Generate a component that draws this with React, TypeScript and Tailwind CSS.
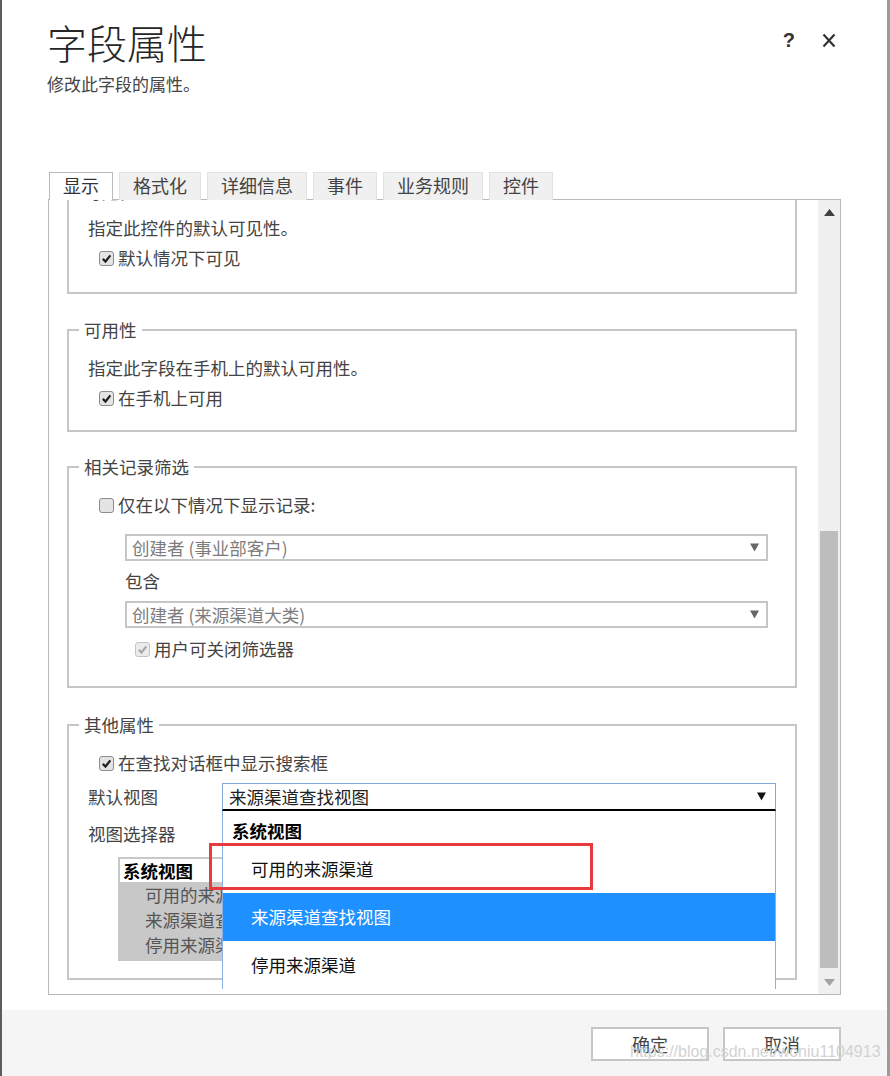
import React from "react";

function CheckBox({ checked = false, disabled = false }: { checked?: boolean; disabled?: boolean }) {
  return (
    <span
      className={
        "inline-flex h-[15px] w-[15px] shrink-0 items-center justify-center rounded-[3px] border " +
        (disabled ? "border-[#c4c4c4] bg-[#ececec]" : "border-[#8c8c8c] bg-[#e4e4e4]")
      }
    >
      {checked && (
        <svg viewBox="0 0 12 12" className="h-[11px] w-[11px]">
          <path
            d="M2 6.4 L4.9 9.3 L10.2 2.6"
            fill="none"
            stroke={disabled ? "#a8a8a8" : "#1e1e1e"}
            strokeWidth="2.4"
          />
        </svg>
      )}
    </span>
  );
}

function Arrow({ color }: { color: string }) {
  return (
    <svg width="9" height="9" viewBox="0 0 9 9">
      <path d="M0 0.5 H9 L4.5 8.5 Z" fill={color} />
    </svg>
  );
}

function GraySelect({ text }: { text: string }) {
  return (
    <div className="ml-[37px] flex h-[27px] w-[643px] items-center justify-between border-2 border-[#c6c6c6] bg-white pl-[5px] pr-[7px] text-[#7d7d7d]">
      <span className="leading-[23px]">{text}</span>
      <Arrow color="#666666" />
    </div>
  );
}

function Group({ title, className, children }: { title: string; className?: string; children: React.ReactNode }) {
  return (
    <fieldset className={"ml-[18px] w-[730px] border-2 border-[#c6c6c6] pl-[19px] pt-[10px] " + (className ?? "")}>
      <legend className="-ml-[9px] px-[5px] leading-[26px] text-[#444]">{title}</legend>
      {children}
    </fieldset>
  );
}

function CheckRow({ label, checked, disabled, indent = "ml-[11px]" }: { label: string; checked?: boolean; disabled?: boolean; indent?: string }) {
  return (
    <div className={"flex h-[30px] items-center gap-[4px] " + indent}>
      <CheckBox checked={checked} disabled={disabled} />
      <span className="text-[#444]">{label}</span>
    </div>
  );
}

const tabs = ["显示", "格式化", "详细信息", "事件", "业务规则", "控件"];

export default function App() {
  return (
    <div className="relative flex h-[1076px] w-[890px] flex-col overflow-hidden border-l-2 border-r-[3px] border-l-[#5c5c5c] border-r-[#9c9c9c] bg-white font-['Noto_Sans_CJK_SC',sans-serif] text-[17.5px]">
      {/* Header */}
      <div className="flex items-start justify-between pl-[45px] pr-[51px] pt-[18px]">
        <div>
          <h1 className="text-[40px] font-extralight leading-[48px] text-[#262626]">字段属性</h1>
          <p className="mt-[6px] text-[17px] leading-[24px] text-[#444]">修改此字段的属性。</p>
        </div>
        <div className="mt-[14px] flex items-center gap-[27px] text-[#333]">
          <span className="font-['Liberation_Sans',sans-serif] text-[20px] font-bold leading-[16px]">?</span>
          <svg width="14" height="15" viewBox="0 0 14 15">
            <path d="M1.5 1.5 L12.5 13.5 M12.5 1.5 L1.5 13.5" stroke="#333" strokeWidth="2.2" />
          </svg>
        </div>
      </div>

      {/* Tabs */}
      <div className="relative z-10 ml-[47px] mt-[76px] flex gap-[6px]">
        {tabs.map((t, i) => (
          <div
            key={t}
            className={
              "-mb-px flex h-[28px] items-center px-[13px] pb-[4px] text-[18px] leading-[24px] " +
              (i === 0
                ? "border border-b-0 border-[#b9b9b9] bg-white text-[#333]"
                : "border border-b-0 border-[#e2e2e2] bg-[#f0f0f0] text-[#444]")
            }
          >
            {t}
          </div>
        ))}
      </div>

      {/* Panel */}
      <div className="ml-[46px] flex h-[796px] w-[793px] border border-[#b9b9b9]">
        <div className="flex-1 overflow-hidden">
          <Group title="可见性" className="-mt-[21px] pb-[19px]">
            <div className="-mt-[2px] leading-[30px] text-[#444]">指定此控件的默认可见性。</div>
            <CheckRow label="默认情况下可见" checked />
          </Group>

          <Group title="可用性" className="mt-[23px] pb-[17px]">
            <div className="leading-[30px] text-[#444]">指定此字段在手机上的默认可用性。</div>
            <CheckRow label="在手机上可用" checked />
          </Group>

          <Group title="相关记录筛选" className="mt-[22px] pb-[22px]">
            <CheckRow label="仅在以下情况下显示记录:" />
            <div className="mt-[14px]">
              <GraySelect text="创建者 (事业部客户)" />
            </div>
            <div className="ml-[37px] mt-[5px] leading-[30px] text-[#444]">包含</div>
            <div className="mt-[5px]">
              <GraySelect text="创建者 (来源渠道大类)" />
            </div>
            <div className="mt-[6px]">
              <CheckRow label="用户可关闭筛选器" checked disabled indent="ml-[47px]" />
            </div>
          </Group>

          <Group title="其他属性" className="mt-[24px] pb-[17px]">
            <CheckRow label="在查找对话框中显示搜索框" checked />
            <div className="mt-[5px] flex items-center">
              <span className="w-[134px] text-[#444]">默认视图</span>
              <div className="relative z-20 w-[554px]">
                <div className="flex h-[28px] items-center justify-between border border-b-2 border-[#86aae0] border-b-black bg-white pl-[6px] pr-[9px] text-[#222]">
                  <span className="leading-[24px]">来源渠道查找视图</span>
                  <Arrow color="#111111" />
                </div>
                {/* open dropdown list */}
                <div className="absolute left-0 top-full w-full border-x border-[#8db0e4] bg-white">
                  <div className="h-[34px] pl-[9px] pt-[8px] font-bold leading-[24px] text-black">系统视图</div>
                  <div className="h-[48px] pl-[28px] leading-[48px] text-[#111]">可用的来源渠道</div>
                  <div className="h-[48px] bg-[#1e90ff] pl-[28px] leading-[48px] text-white">来源渠道查找视图</div>
                  <div className="h-[48px] pl-[28px] leading-[48px] text-[#111]">停用来源渠道</div>
                </div>
                {/* red annotation box */}
                <div className="absolute -left-[13px] top-[60px] h-[47px] w-[384px] border-[3px] border-[#e8393b]" />
              </div>
            </div>
            <div className="mt-[8px] leading-[30px] text-[#444]">视图选择器</div>
            <div className="ml-[30px] mt-[8px] h-[104px] w-[420px] border-2 border-[#c8c8c8] bg-[#c8c8c8]">
              <div className="h-[23px] bg-white pl-[3px] font-bold leading-[23px] text-black">系统视图</div>
              <div className="pl-[25px] leading-[25px] text-[#555]">可用的来源渠道</div>
              <div className="pl-[25px] leading-[25px] text-[#555]">来源渠道查找视图</div>
              <div className="pl-[25px] leading-[25px] text-[#555]">停用来源渠道</div>
            </div>
          </Group>
        </div>

        {/* Scrollbar */}
        <div className="flex w-[22px] flex-col bg-[#f0f0f0]">
          <div className="flex h-[24px] items-center justify-center">
            <svg width="11" height="7" viewBox="0 0 11 7">
              <path d="M5.5 0 L11 7 H0 Z" fill="#404040" />
            </svg>
          </div>
          <div className="flex-1">
            <div className="mx-[2px] mt-[307px] h-[437px] bg-[#bdbdbd]" />
          </div>
          <div className="flex h-[24px] items-center justify-center">
            <svg width="11" height="7" viewBox="0 0 11 7">
              <path d="M0 0 H11 L5.5 7 Z" fill="#a3a3a3" />
            </svg>
          </div>
        </div>
      </div>

      {/* Footer */}
      <div className="mt-[15px] flex flex-1 justify-end gap-[14px] bg-[#f5f5f5] pr-[46px] pt-[17px]">
        <button className="h-[34px] w-[118px] border-2 border-[#c6c6c6] bg-white text-[18px] text-[#444]">确定</button>
        <button className="h-[34px] w-[118px] border-2 border-[#c6c6c6] bg-white text-[18px] text-[#444]">取消</button>
      </div>

      <span className="pointer-events-none absolute left-[628px] top-[1041px] font-['Liberation_Sans',sans-serif] text-[16px] leading-[22px] text-[#d2d2d2]">
        https://blog.csdn.net/woniu1104913
      </span>
    </div>
  );
}
